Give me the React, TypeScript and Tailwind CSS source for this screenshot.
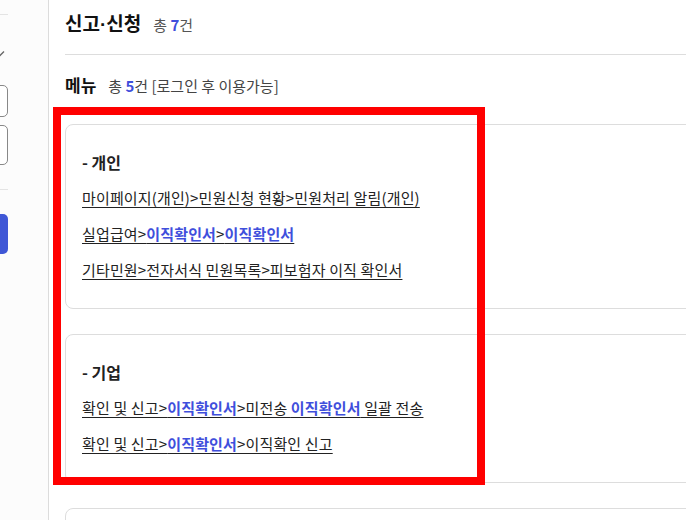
const FONT = { fontFamily: '"Noto Sans CJK KR", "Noto Sans", sans-serif' };

type Part = { t: string; b?: boolean };

const groups: { title: string; links: Part[][] }[] = [
  {
    title: "- 개인",
    links: [
      [{ t: "마이페이지(개인)>민원신청 현황>민원처리 알림(개인)" }],
      [{ t: "실업급여>" }, { t: "이직확인서", b: true }, { t: ">" }, { t: "이직확인서", b: true }],
      [{ t: "기타민원>전자서식 민원목록>피보험자 이직 확인서" }],
    ],
  },
  {
    title: "- 기업",
    links: [
      [
        { t: "확인 및 신고>" },
        { t: "이직확인서", b: true },
        { t: ">미전송 " },
        { t: "이직확인서", b: true },
        { t: " 일괄 전송" },
      ],
      [{ t: "확인 및 신고>" }, { t: "이직확인서", b: true }, { t: ">이직확인 신고" }],
    ],
  },
];

function Sidebar() {
  return (
    <div className="w-[49px] shrink-0 overflow-hidden border-r border-[#dcdcdc] bg-[#fcfcfc]">
      <div className="-ml-[100px] w-[108px] flex flex-col">
        <div className="h-[15px] border-b border-[#e4e4e4]" />
        <div className="h-[28px] mt-[25px] flex items-center justify-end">
          <svg width="12" height="8" viewBox="0 0 12 8" className="mr-[3px]">
            <path d="M1 1.5 L6 6.5 L11 1.5" fill="none" stroke="#666" strokeWidth="1.3" />
          </svg>
        </div>
        <div className="mt-[17px] h-[32px] rounded-[5px] border border-[#888] bg-white" />
        <div className="mt-[8px] h-[40px] rounded-[5px] border border-[#888] bg-white" />
        <div className="mt-[24px] border-b border-[#e4e4e4]" />
        <div className="mt-[24px] h-[40px] rounded-[5px] bg-[#3f57d6]" />
      </div>
    </div>
  );
}

function Link({ parts }: { parts: Part[] }) {
  return (
    <p className="text-[15px] leading-[22px] text-[#222] tracking-[0.15px]">
      <a className="underline underline-offset-[3px] decoration-[#222] cursor-pointer">
        {parts.map((p, i) =>
          p.b ? (
            <span key={i} className="font-bold text-[#3f4fdc]">
              {p.t}
            </span>
          ) : (
            <span key={i}>{p.t}</span>
          )
        )}
      </a>
    </p>
  );
}

export default function App() {
  return (
    <div className="relative flex w-[686px] h-[520px] overflow-hidden bg-white" style={FONT}>
      <Sidebar />

      <div className="w-[800px] shrink-0 pl-4">
        {/* Header */}
        <div className="h-[55px] pt-[9px] border-b border-[#dddddd] flex items-baseline">
          <h1 className="text-[19px] leading-[28px] font-bold text-[#111]">
            신고<span className="font-['Liberation_Sans']">·</span>신청
          </h1>
          <span className="ml-[12px] text-[15px] leading-[22px] text-[#555]">
            총 <b className="font-bold text-[#3f4fdc]">7</b>건
          </span>
        </div>

        {/* Menu */}
        <div className="mt-[19px] h-[22px] flex items-baseline">
          <h2 className="text-[17px] leading-[22px] font-bold text-[#111]">메뉴</h2>
          <span className="ml-[12px] text-[15px] leading-[22px] text-[#444]">
            총 <b className="font-bold text-[#3f4fdc]">5</b>건 [로그인 후 이용가능]
          </span>
        </div>

        <div className="mt-[28px] flex flex-col gap-[25px]">
          {groups.map((g) => (
            <div
              key={g.title}
              className="rounded-[8px] border border-[#dddddd] pl-4 pt-[26px] pb-[27px] flex flex-col gap-[14px]"
            >
              <p className="text-[16px] leading-[22px] font-semibold text-[#222]">{g.title}</p>
              {g.links.map((l, i) => (
                <Link key={i} parts={l} />
              ))}
            </div>
          ))}
          <div className="rounded-[8px] border border-[#dddddd] h-[80px]" />
        </div>
      </div>

      {/* annotation overlay */}
      <div className="pointer-events-none absolute left-[53px] top-[107px] w-[432px] h-[378px] border-8 border-[#ff0000]" />
    </div>
  );
}
